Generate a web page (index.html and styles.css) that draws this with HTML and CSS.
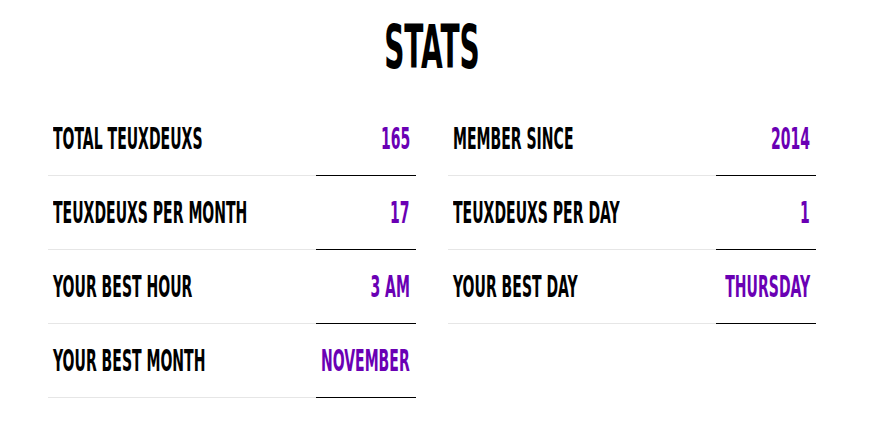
FILE: index.html
```html
<!DOCTYPE html>
<html lang="en">

<head>
    <meta charset="utf-8">
    <meta name="viewport" content="width=device-width, initial-scale=1.0">
    <title>Stats</title>

    <link rel="stylesheet" href="styles.css">

</head>

<body>

    <main class="stats">
        <h1 class="overskrift"><span>Stats</span></h1>

        <div class="kolonner">
            <div class="kolonne">
                <div class="række">
                    <div class="navn"><span>Total Teuxdeuxs</span></div>
                    <div class="tal"><span>165</span></div>
                </div>
                <div class="række">
                    <div class="navn"><span>Teuxdeuxs per month</span></div>
                    <div class="tal"><span>17</span></div>
                </div>
                <div class="række">
                    <div class="navn"><span>Your best hour</span></div>
                    <div class="tal"><span>3 AM</span></div>
                </div>
                <div class="række">
                    <div class="navn"><span>Your best month</span></div>
                    <div class="tal"><span>November</span></div>
                </div>
            </div>

            <div class="kolonne">
                <div class="række">
                    <div class="navn"><span>Member since</span></div>
                    <div class="tal"><span>2014</span></div>
                </div>
                <div class="række">
                    <div class="navn"><span>Teuxdeuxs per day</span></div>
                    <div class="tal"><span>1</span></div>
                </div>
                <div class="række">
                    <div class="navn"><span>Your best day</span></div>
                    <div class="tal"><span>Thursday</span></div>
                </div>
            </div>
        </div>
    </main>

</body>

</html>
```

FILE: styles.css
```css
body {
    margin: 0;
    background: white;
    color: black;
    font-family: "DejaVu Sans Condensed", "DejaVu Sans", sans-serif;
    font-stretch: condensed;
    font-weight: bold;
    text-transform: uppercase;
}

.stats {
    width: 768px;
    margin-left: 48px;
}

.overskrift {
    margin: 17px 0 25px 0;
    font-size: 60px;
    line-height: 60px;
    text-align: center;
    font-weight: bold;
}

.overskrift span {
    display: inline-block;
    transform: scaleX(0.52);
}

.kolonner {
    display: grid;
    grid-template-columns: minmax(0, 1fr) minmax(0, 1fr);
    gap: 32px;
}

.kolonne {
    min-width: 0;
}

.række {
    display: grid;
    grid-template-columns: minmax(0, 1fr) 100px;
    height: 74px;
    font-size: 30px;
    line-height: 30px;
}

.navn {
    display: flex;
    align-items: center;
    min-width: 0;
    padding-left: 5px;
    border-bottom: 1px solid #e6e6e6;
    white-space: nowrap;
}

.navn span {
    display: inline-block;
    transform: scaleX(0.52);
    transform-origin: left center;
}

.tal {
    display: flex;
    align-items: center;
    justify-content: flex-end;
    min-width: 0;
    padding-right: 6px;
    border-bottom: 1px solid black;
    color: #6a00b4;
    white-space: nowrap;
}

.tal span {
    display: inline-block;
    transform: scaleX(0.52);
    transform-origin: right center;
}
```
